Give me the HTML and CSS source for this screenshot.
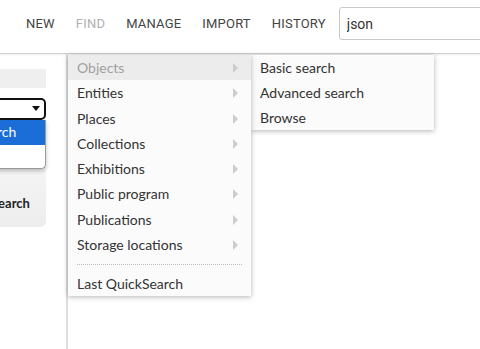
FILE: index.html
```html
<!DOCTYPE html>
<html lang="en">
<head>
    <meta charset="UTF-8">
    <meta name="viewport" content="width=device-width, initial-scale=1.0">
    <title>Find</title>
    <link rel="stylesheet" href="styles.css">
</head>
<body>

<header class="topbar">
    <nav class="main-nav">
        <a class="nav-link">NEW</a>
        <a class="nav-link nav-active">FIND</a>
        <a class="nav-link">MANAGE</a>
        <a class="nav-link">IMPORT</a>
        <a class="nav-link">HISTORY</a>
    </nav>
    <input class="quick-search" type="text" value="json">
</header>

<div class="page">
    <aside class="sidebar">
        <div class="side-panel">
            <div class="side-title"></div>
            <div class="side-body">
                <div class="side-select">
                    <span class="select-arrow"></span>
                </div>
                <ul class="select-list">
                    <li class="select-option selected">Basic search</li>
                    <li class="select-option">Browse</li>
                </ul>
                <div class="side-label">Search</div>
            </div>
        </div>
    </aside>
    <main class="content"></main>

    <!-- FIND dropdown -->
    <ul class="find-menu">
        <li class="menu-item menu-hover">Objects <span class="menu-arrow"></span></li>
        <li class="menu-item">Entities <span class="menu-arrow"></span></li>
        <li class="menu-item">Places <span class="menu-arrow"></span></li>
        <li class="menu-item">Collections <span class="menu-arrow"></span></li>
        <li class="menu-item">Exhibitions <span class="menu-arrow"></span></li>
        <li class="menu-item">Public program <span class="menu-arrow"></span></li>
        <li class="menu-item">Publications <span class="menu-arrow"></span></li>
        <li class="menu-item">Storage locations <span class="menu-arrow"></span></li>
        <li class="menu-sep"></li>
        <li class="menu-item">Last QuickSearch</li>
    </ul>
    <ul class="sub-menu">
        <li class="menu-item">Basic search</li>
        <li class="menu-item">Advanced search</li>
        <li class="menu-item">Browse</li>
    </ul>
</div>

</body>
</html>
```

FILE: styles.css
```css
body {
    margin: 0;
    font-family: Lato, "Noto Sans", sans-serif;
    background-color: #fff;
    color: #333;
    height: 349px;
    overflow: hidden;
}
.topbar {
    display: flex;
    align-items: center;
    height: 53px;
    border-bottom: 1px solid #cfcfcf;
    box-shadow: 0 1px 2px rgba(0, 0, 0, 0.08);
}
.main-nav {
    display: flex;
    gap: 21px;
    padding-left: 26px;
    margin-top: -6px;
}
.nav-link {
    font-family: Roboto, sans-serif;
    font-size: 13px;
    letter-spacing: 0.2px;
    color: #444;
}
.nav-active {
    color: #b0b0b0;
}
.quick-search {
    margin-left: 13px;
    margin-top: -6px;
    width: 200px;
    height: 33px;
    box-sizing: border-box;
    border: 1px solid #c8c8c8;
    border-radius: 3px;
    padding: 0 7px;
    font-family: Roboto, sans-serif;
    font-size: 14px;
    color: #333;
    flex-shrink: 0;
}
.page {
    position: relative;
    display: flex;
    height: 295px;
}
.sidebar {
    width: 66px;
    border-right: 2px solid #dedede;
    overflow: hidden;
    flex-shrink: 0;
}
.side-panel {
    margin-left: -110px;
    width: 156px;
    padding-top: 15px;
}
.side-title {
    height: 19px;
    background-color: #efefef;
}
.side-body {
    padding-top: 10px;
    height: 129px;
    background: linear-gradient(to bottom, #fff, #ededed);
    border-radius: 0 0 6px 0;
}
.side-select {
    height: 22px;
    box-sizing: border-box;
    border: 2px solid #111;
    border-radius: 5px;
    position: relative;
    background-color: #fff;
}
.select-arrow {
    position: absolute;
    right: 4px;
    top: 6px;
    border-left: 4px solid transparent;
    border-right: 4px solid transparent;
    border-top: 5px solid #111;
}
.select-list {
    list-style: none;
    margin: 0;
    padding: 0;
    background-color: #fff;
    border: 1px solid #9a9a9a;
    border-top: none;
    border-radius: 0 0 5px 5px;
    box-shadow: 0 2px 4px rgba(0, 0, 0, 0.25);
    overflow: hidden;
    height: 49px;
    box-sizing: border-box;
}
.select-option {
    height: 25px;
    line-height: 24px;
    padding-left: 50px;
    font-size: 14px;
    color: #fff;
}
.select-option.selected {
    background-color: #1b6ed8;
}
.side-label {
    margin-top: 26px;
    padding-left: 101px;
    font-weight: bold;
    font-size: 13px;
    color: #222;
}
.content {
    flex: 1;
}
.find-menu, .sub-menu {
    position: absolute;
    top: 1px;
    list-style: none;
    margin: 0;
    padding: 0;
    background-color: #fbfbfb;
    box-shadow: 0 1px 5px rgba(0, 0, 0, 0.3);
}
.find-menu {
    left: 68px;
    width: 183px;
    height: 241px;
    z-index: 2;
}
.sub-menu {
    left: 251px;
    width: 183px;
    height: 75px;
    z-index: 1;
}
.menu-item {
    height: 25.3px;
    line-height: 25px;
    padding-left: 9px;
    font-size: 14px;
    color: #333;
    position: relative;
}
.sub-menu .menu-item {
    height: 25px;
}
.menu-hover {
    background-color: #ececec;
    color: #a0a0a0;
}
.menu-arrow {
    position: absolute;
    right: 13px;
    top: 8px;
    border-top: 5px solid transparent;
    border-bottom: 5px solid transparent;
    border-left: 5px solid #cdcdcd;
}
.menu-sep {
    margin: 7px 9px 6px 9px;
    border-top: 1px dotted #bbb;
}
```
